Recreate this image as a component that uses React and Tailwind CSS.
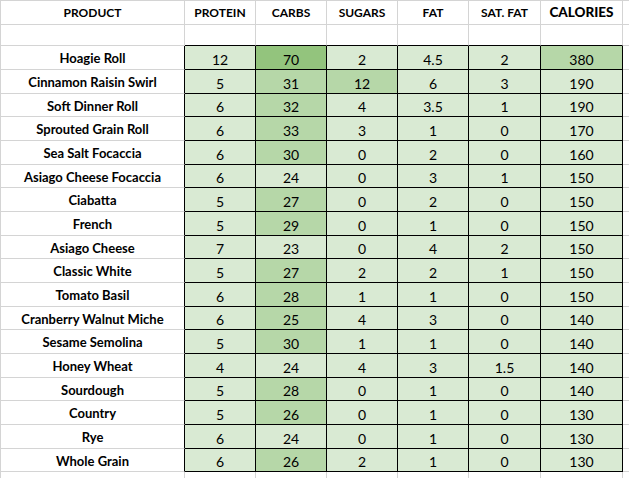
import React from "react";

// name, protein, carbs, sugars, fat, sat fat, calories
const rows = [
  ["Hoagie Roll", "12", "70", "2", "4.5", "2", "380"],
  ["Cinnamon Raisin Swirl", "5", "31", "12", "6", "3", "190"],
  ["Soft Dinner Roll", "6", "32", "4", "3.5", "1", "190"],
  ["Sprouted Grain Roll", "6", "33", "3", "1", "0", "170"],
  ["Sea Salt Focaccia", "6", "30", "0", "2", "0", "160"],
  ["Asiago Cheese Focaccia", "6", "24", "0", "3", "1", "150"],
  ["Ciabatta", "5", "27", "0", "2", "0", "150"],
  ["French", "5", "29", "0", "1", "0", "150"],
  ["Asiago Cheese", "7", "23", "0", "4", "2", "150"],
  ["Classic White", "5", "27", "2", "2", "1", "150"],
  ["Tomato Basil", "6", "28", "1", "1", "0", "150"],
  ["Cranberry Walnut Miche", "6", "25", "4", "3", "0", "140"],
  ["Sesame Semolina", "5", "30", "1", "1", "0", "140"],
  ["Honey Wheat", "4", "24", "4", "3", "1.5", "140"],
  ["Sourdough", "5", "28", "0", "1", "0", "140"],
  ["Country", "5", "26", "0", "1", "0", "130"],
  ["Rye", "6", "24", "0", "1", "0", "130"],
  ["Whole Grain", "6", "26", "2", "1", "0", "130"],
];

const widths = ["w-[185px]", "w-[71px]", "w-[71px]", "w-[71px]", "w-[71px]", "w-[72px]", "w-[82px]"];
const heights = ["h-[24px]", "h-[24px]", "h-[23px]"];

const headers = ["PROTEIN", "CARBS", "SUGARS", "FAT", "SAT. FAT"];

// shade for a value cell: col index 1..6
function shade(col, v) {
  const n = parseFloat(v);
  if (col === 2 && n >= 60) return "bg-[#93c47d]";
  if (col === 2 && n >= 25) return "bg-[#b6d7a8]";
  if (col === 3 && n >= 10) return "bg-[#b6d7a8]";
  if (col === 6 && n >= 300) return "bg-[#b6d7a8]";
  return "bg-[#d9ead3]";
}

export default function App() {
  return (
    <div className="w-[629px] h-[478px] overflow-hidden bg-white border-t border-[#d4d4d4] text-black font-['Lato','Open_Sans',sans-serif]">
      {/* header row */}
      <div className="flex h-[24px]">
        <div className={`${widths[0]} border-l border-r border-b border-[#d4d4d4] flex items-end justify-center pb-[2px] text-[12px] font-bold`}>
          PRODUCT
        </div>
        {headers.map((h, i) => (
          <div key={h} className={`${widths[i + 1]} border-r border-b border-[#d4d4d4] flex items-end justify-center pb-[2px] text-[12px] font-bold`}>
            {h}
          </div>
        ))}
        <div className={`${widths[6]} border-r border-b border-[#d4d4d4] flex items-start justify-center pt-[1px] text-[13.5px] font-black`}>
          CALORIES
        </div>
        <div className="flex-1 border-b border-[#d4d4d4]" />
      </div>

      {/* blank row */}
      <div className="flex h-[21px]">
        <div className={`${widths[0]} border-l border-r border-b border-[#d4d4d4]`} />
        {widths.slice(1).map((w, i) => (
          <div key={i} className={`${w} border-r border-[#d4d4d4] border-b border-b-black`} />
        ))}
        <div className="flex-1 border-b border-[#d4d4d4]" />
      </div>

      {rows.map((r, ri) => (
        <div key={r[0]} className={`flex ${heights[ri % 3]}`}>
          <div className={`${widths[0]} border-l border-b border-[#d4d4d4] border-r border-r-black flex items-center justify-center pt-[3px] text-[13px] font-bold`}>
            {r[0]}
          </div>
          {r.slice(1).map((v, ci) => (
            <div key={ci} className={`${widths[ci + 1]} ${shade(ci + 1, v)} border-r border-b border-black flex items-center justify-center pt-[3px] text-[14px]`}>
              {v}
            </div>
          ))}
          <div className="flex-1 border-b border-[#d4d4d4]" />
        </div>
      ))}

      {/* trailing blank row */}
      <div className="flex h-[7px]">
        <div className={`${widths[0]} border-l border-r border-[#d4d4d4]`} />
        {widths.slice(1).map((w, i) => (
          <div key={i} className={`${w} border-r border-[#d4d4d4]`} />
        ))}
      </div>
    </div>
  );
}
